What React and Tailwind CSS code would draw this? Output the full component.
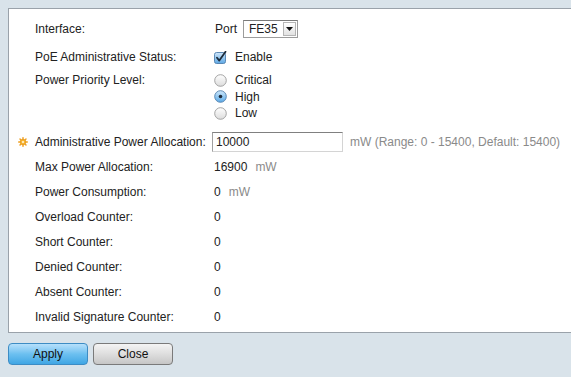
import React from "react";

const rows = [
  ["Max Power Allocation:", "16900", "mW"],
  ["Power Consumption:", "0", "mW"],
  ["Overload Counter:", "0"],
  ["Short Counter:", "0"],
  ["Denied Counter:", "0"],
  ["Absent Counter:", "0"],
  ["Invalid Signature Counter:", "0"],
];

function Radio({ checked }) {
  return (
    <svg width="13" height="13" viewBox="0 0 13 13" className="shrink-0">
      <defs>
        <linearGradient id={checked ? "rOn" : "rOff"} x1="0" y1="0" x2="0" y2="1">
          <stop offset="0" stopColor={checked ? "#cfe8fb" : "#ffffff"} />
          <stop offset="1" stopColor={checked ? "#5aa9e6" : "#dcdcdc"} />
        </linearGradient>
      </defs>
      <circle cx="6.5" cy="6.5" r="5.8" fill={`url(#${checked ? "rOn" : "rOff"})`} stroke={checked ? "#4f7fae" : "#9a9a9a"} strokeWidth="0.9" />
      {checked && <circle cx="6.5" cy="6.5" r="1.8" fill="#1d2b3a" />}
    </svg>
  );
}

function Checkbox() {
  return (
    <svg width="13" height="13" viewBox="0 0 13 13" className="shrink-0">
      <defs>
        <linearGradient id="cb" x1="0" y1="0" x2="0" y2="1">
          <stop offset="0" stopColor="#cfe6fa" />
          <stop offset="1" stopColor="#5ea8e4" />
        </linearGradient>
      </defs>
      <rect x="0.5" y="1.5" width="11" height="11" rx="2" fill="url(#cb)" stroke="#4f7fae" strokeWidth="0.9" />
      <path d="M3 6.8 L5.3 9.6 L11.5 0.8" fill="none" stroke="#1d2b3a" strokeWidth="1.8" strokeLinecap="round" strokeLinejoin="round" />
    </svg>
  );
}

function Gear() {
  return (
    <svg width="10" height="10" viewBox="0 0 11 11" className="shrink-0">
      <g stroke="#f0a020" strokeWidth="1.6" strokeLinecap="round">
        <line x1="5.5" y1="0.8" x2="5.5" y2="10.2" />
        <line x1="0.8" y1="5.5" x2="10.2" y2="5.5" />
        <line x1="2.2" y1="2.2" x2="8.8" y2="8.8" />
        <line x1="8.8" y1="2.2" x2="2.2" y2="8.8" />
      </g>
      <circle cx="5.5" cy="5.5" r="3" fill="#f7b733" stroke="#e08a10" strokeWidth="0.6" />
      <circle cx="5.5" cy="5.5" r="1.2" fill="#fff6d8" />
    </svg>
  );
}

export default function App() {
  return (
    <div className="w-[571px] h-[377px] overflow-hidden bg-[#d9e3ea] pt-[8px] pl-[8px] text-[12px] text-[#222] font-['Liberation_Sans',Arial,sans-serif]">
      <div className="w-[600px] bg-white border border-[#9aa2aa] pl-[26px] pt-[10px] pb-[2px]">
        {/* Interface */}
        <div className="flex items-center h-[20px]">
          <div className="w-[180px]">Interface:</div>
          <span>Port</span>
          <div className="ml-[6px] flex items-center h-[18px] w-[55px] border border-[#9c9c9c] border-t-[#7a7a7a] bg-white">
            <span className="pl-[5px] flex-1">FE35</span>
            <div className="w-[13px] h-[14px] mr-[1px] border border-[#b5b5b5] bg-gradient-to-b from-white to-[#e2e2e2] flex items-center justify-center">
              <svg width="7" height="4" viewBox="0 0 7 4"><path d="M0 0 L7 0 L3.5 4 Z" fill="#111" /></svg>
            </div>
          </div>
        </div>

        {/* PoE status */}
        <div className="flex items-center h-[20px] mt-[8px]">
          <div className="w-[179px]">PoE Administrative Status:</div>
          <Checkbox />
          <span className="ml-[8px]">Enable</span>
        </div>

        {/* Priority */}
        <div className="flex mt-[5px]">
          <div className="w-[179px] h-[16px] flex items-center">Power Priority Level:</div>
          <div className="flex flex-col">
            {[["Critical", false], ["High", true], ["Low", false]].map(([t, c]) => (
              <div key={t} className="flex items-center h-[16.5px]">
                <Radio checked={c} />
                <span className="ml-[8px]">{t}</span>
              </div>
            ))}
          </div>
        </div>

        {/* Admin power allocation */}
        <div className="flex items-center h-[20px] mt-[10px] -ml-[17px]">
          <Gear />
          <div className="ml-[7px] w-[177px]">Administrative Power Allocation:</div>
          <div className="w-[131px] h-[20px] border border-[#d4d4d4] border-t-[#808080] border-l-[#a0a0a0] pl-[3px] flex items-center">10000</div>
          <span className="ml-[7px] text-[#8a8a8a]">mW (Range: 0 - 15400, Default: 15400)</span>
        </div>

        {/* Counters */}
        <div className="mt-[3px]">
          {rows.map(([label, val, unit]) => (
            <div key={label} className="flex items-center h-[25px]">
              <div className="w-[179px]">{label}</div>
              <span>{val}</span>
              {unit && <span className="ml-[8px] text-[#8a8a8a]">{unit}</span>}
            </div>
          ))}
        </div>
      </div>

      {/* Buttons */}
      <div className="flex gap-[5px] mt-[10px]">
        <button className="w-[80px] h-[22px] rounded-[4px] border border-[#3d8cc4] bg-gradient-to-b from-[#b6e0fb] via-[#6cc0f0] to-[#3fa6e4] text-[12px] text-[#111]">
          Apply
        </button>
        <button className="w-[80px] h-[22px] rounded-[4px] border border-[#7a7a7a] bg-gradient-to-b from-[#f4f4f4] via-[#dedede] to-[#c6c6c6] text-[12px] text-[#111]">
          Close
        </button>
      </div>
    </div>
  );
}
